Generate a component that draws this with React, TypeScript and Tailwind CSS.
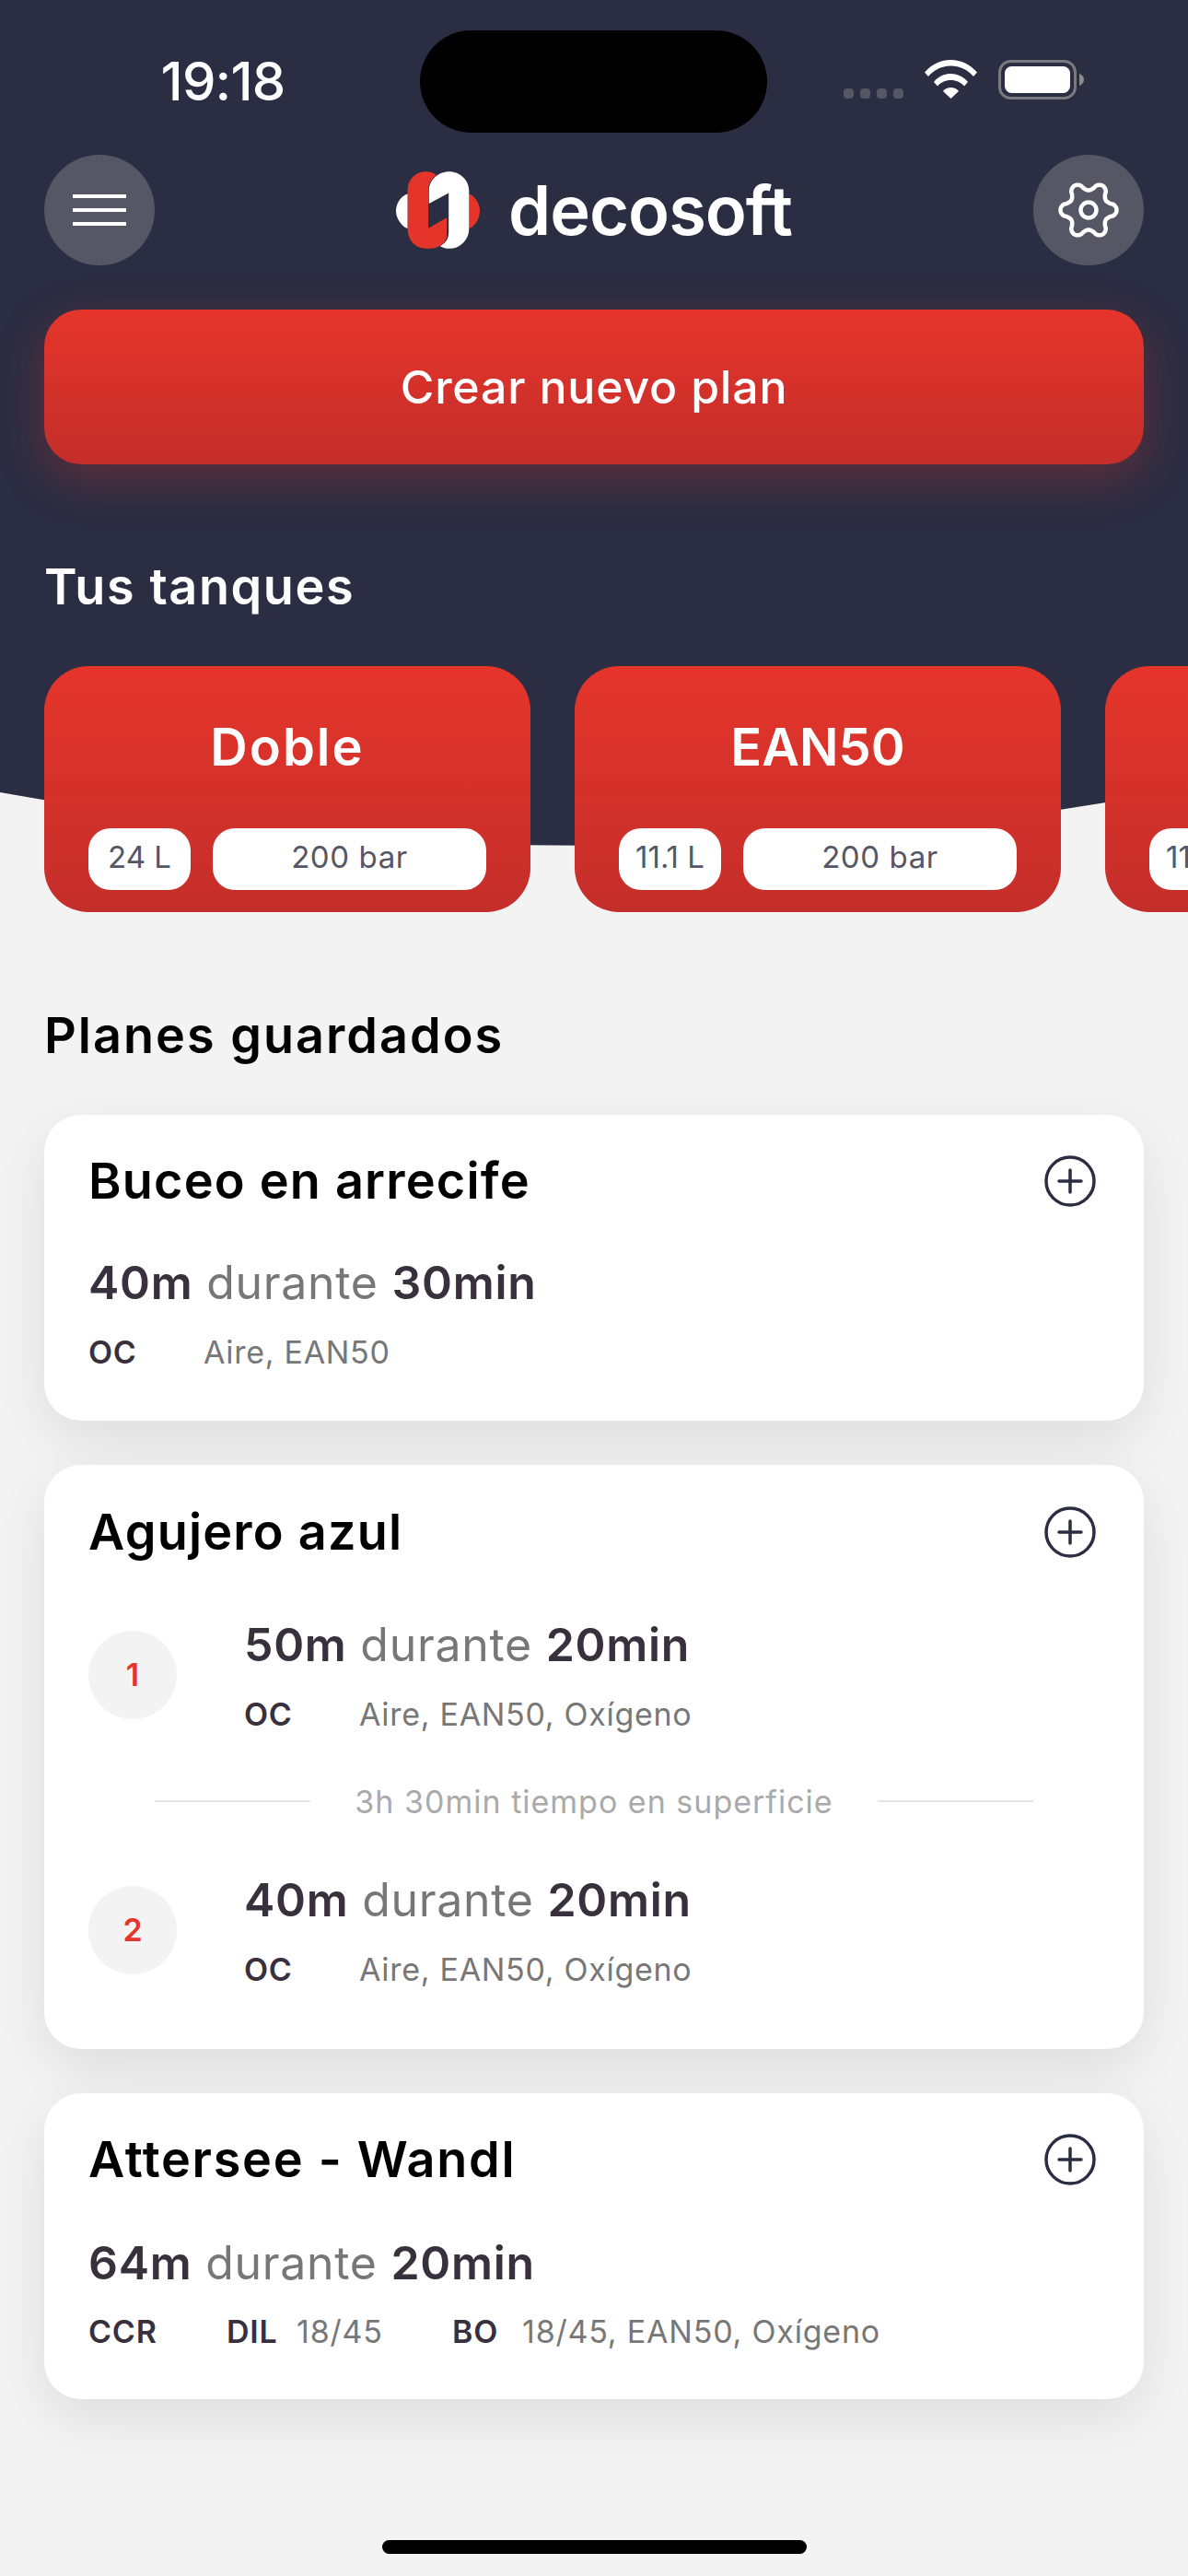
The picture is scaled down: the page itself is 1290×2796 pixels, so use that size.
import React from "react";

// six rounded lobes, left/right lobes on the horizontal axis
function gearPath() {
  const pts: string[] = [];
  for (let i = 0; i < 180; i++) {
    const a = (i / 180) * Math.PI * 2;
    const c = Math.cos(6 * a);
    const r = 26 + 4.5 * Math.sign(c) * Math.pow(Math.abs(c), 0.7);
    pts.push(`${(32 + r * Math.cos(a)).toFixed(2)} ${(32 + r * Math.sin(a)).toFixed(2)}`);
  }
  return "M" + pts.join("L") + "Z";
}

function StatusBar() {
  return (
    <div className="h-[168px] flex items-start relative">
      <div className="w-[484px] pt-[60px] text-center text-white text-[58px] leading-[56px] font-medium tracking-[-0.8px]">19:18</div>
      <div className="mt-[33px] ml-[-28px] w-[377px] h-[111px] rounded-full bg-black"></div>
      <div className="ml-[83px] mt-[96px] flex gap-[7px]">
        <div className="w-[11px] h-[11px] rounded-[4px] bg-[#565765]"></div>
        <div className="w-[11px] h-[11px] rounded-[4px] bg-[#565765]"></div>
        <div className="w-[11px] h-[11px] rounded-[4px] bg-[#565765]"></div>
        <div className="w-[11px] h-[11px] rounded-[4px] bg-[#565765]"></div>
      </div>
      <svg className="ml-[23px] mt-[65px]" width="57" height="42" viewBox="0 0 57 42" fill="#fff">
        <path d="M0 13.5C7.5 5 17.500 0 28.500 0S49.500 5 57 13.500L53 18C46.500 10.500 38 6.500 28.500 6.500S10.500 10.500 4 18Z" />
        <path d="M10 24C14.500 18.500 21 15 28.500 15S42.500 18.500 47 24L43 28.500C39.500 24.500 34.500 22 28.500 22S17.500 24.500 14 28.500Z" />
        <path d="M20 34C22 31.500 25 30 28.500 30S35 31.500 37 34L28.500 42Z" />
      </svg>
      <svg className="ml-[23px] mt-[65px]" width="93" height="43" viewBox="0 0 93 43" fill="none">
        <rect x="1.500" y="1.500" width="82" height="40" rx="12" stroke="#7a7a7e" strokeWidth="3" />
        <rect x="7" y="7" width="71" height="29" rx="7.500" fill="#fff" />
        <path d="M88 15C91 16 93 18.500 93 21.500S91 27 88 28Z" fill="#8b8b8d" />
      </svg>
    </div>
  );
}

function Logo() {
  return (
    <svg width="91" height="84" viewBox="93 78 272 250">
      <path fill="#fff" d="M131 150C105 160 93 185 93 205C93 230 110 255 131 263Z" />
      <path fill="#e5352b" d="M330 150C352 160 365 185 365 205C365 230 350 255 330 263Z" />
      <path fill="#e5352b" d="M131 140C131 100 160 78 192 78C205 78 215 82 224 90C208 100 198 118 198 140L198 262L258 228L258 285C258 300 248 312 234 320C220 328 205 328 192 328C160 328 131 305 131 265Z" />
      <path fill="#fff" d="M266 78C300 78 330 105 330 140L330 265C330 300 300 328 268 328C255 328 245 325 236 320C255 310 264 295 264 275L264 148L200 182L200 140C200 105 230 78 266 78Z" />
    </svg>
  );
}

function Header() {
  return (
    <div className="h-[120px] px-[48px] flex items-center justify-between">
      <div className="w-[120px] h-[120px] rounded-full bg-[#565765] flex flex-col items-center justify-center gap-[11px]">
        <div className="w-[58px] h-[4px] bg-white"></div>
        <div className="w-[58px] h-[4px] bg-white"></div>
        <div className="w-[58px] h-[4px] bg-white"></div>
      </div>
      <div className="flex items-center gap-[31px]">
        <Logo />
        <span className="text-white text-[74px] leading-[84px] font-semibold tracking-[-1px]">decosoft</span>
      </div>
      <div className="w-[120px] h-[120px] rounded-full bg-[#565765] flex items-center justify-center">
        <svg width="68" height="68" viewBox="-2 -2 68 68" fill="none" stroke="#fff" strokeWidth="4.500" strokeLinejoin="round">
          <path d={gearPath()} />
          <circle cx="32" cy="32" r="8.500" />
        </svg>
      </div>
    </div>
  );
}

function TankCard({ name, liters, spacing }: { name: string; liters: string; spacing: string }) {
  return (
    <div className="w-[528px] h-[267px] shrink-0 rounded-[48px] bg-gradient-to-b from-[#e5352b] to-[#c42e2a] px-[48px] pt-[52px] flex flex-col">
      <div className={"text-center text-white text-[56px] leading-[72px] font-semibold " + spacing}>{name}</div>
      <div className="mt-[52px] flex gap-[24px]">
        <div className="w-[111px] h-[67px] pb-[3px] rounded-[24px] bg-white flex items-center justify-center text-[#565765] text-[33px] whitespace-nowrap">{liters}</div>
        <div className="w-[297px] h-[67px] pb-[3px] rounded-[24px] bg-white flex items-center justify-center text-[#565765] text-[33px] tracking-[0.6px]">200 bar</div>
      </div>
    </div>
  );
}

function PlusIcon() {
  return (
    <svg width="56" height="56" viewBox="0 0 56 56" fill="none" stroke="#2b2d42" strokeWidth="3.500" strokeLinecap="round">
      <circle cx="28" cy="28" r="26" />
      <path d="M28 16V40M16 28H40" />
    </svg>
  );
}

function CardTitle({ title, spacing }: { title: string; spacing: string }) {
  return (
    <div className="h-[72px] flex items-center justify-between">
      <div className={"text-black text-[54px] leading-[72px] font-semibold " + spacing}>{title}</div>
      <div className="mr-[4px]"><PlusIcon /></div>
    </div>
  );
}

function DepthLine({ depth, time }: { depth: string; time: string }) {
  return (
    <div className="h-[64px] text-[50px] leading-[64px] text-[#777777] tracking-[0.7px] whitespace-nowrap">
      <span className="font-semibold text-[#38303c]">{depth}</span> durante <span className="font-semibold text-[#38303c]">{time}</span>
    </div>
  );
}

function GasLine({ gases }: { gases: string }) {
  return (
    <div className="h-[48px] flex items-center text-[34px] leading-[48px] tracking-[0.7px]">
      <span className="w-[125px] font-semibold text-[#38303c]">OC</span>
      <span className="text-[#777777]">{gases}</span>
    </div>
  );
}

function DiveRow({ num, depth, time, mt }: { num: string; depth: string; time: string; mt: string }) {
  return (
    <div className={"flex items-center gap-[73px] " + mt}>
      <div className="w-[96px] h-[96px] mb-[3px] rounded-full bg-[#f3f3f3] flex items-center justify-center text-[#e5352b] text-[34px] font-semibold">{num}</div>
      <div className="flex flex-col gap-[20px]">
        <DepthLine depth={depth} time={time} />
        <GasLine gases="Aire, EAN50, Oxígeno" />
      </div>
    </div>
  );
}

const cardClass = "rounded-[40px] bg-white px-[48px] shadow-[0_20px_60px_rgba(0,0,0,0.09)]";

export default function App() {
  return (
    <div className="relative w-[1290px] h-[2796px] overflow-hidden bg-[#f3f3f3] font-['Inter',sans-serif]">
      {/* curved dark backdrop behind the header */}
      <svg className="absolute top-0 left-0" width="1290" height="930" viewBox="0 0 1290 930">
        <path d="M0 0H1290V855Q650 978 0 860Z" fill="#2b2d42" />
      </svg>

      <div className="relative flex flex-col">
        <StatusBar />
        <Header />

        <div className="mx-[48px] mt-[48px] h-[168px] rounded-[40px] bg-gradient-to-b from-[#e5352b] to-[#c42e2a] shadow-[0_16px_50px_rgba(229,53,43,0.28)] flex items-center justify-center text-white text-[50px] font-medium tracking-[0.8px]">
          Crear nuevo plan
        </div>

        <div className="mt-[97px] px-[48px] text-white text-[54px] leading-[72px] font-semibold tracking-[1.6px]">Tus tanques</div>

        <div className="mt-[50px] pl-[48px] flex gap-[48px] overflow-hidden">
          <TankCard name="Doble" liters="24 L" spacing="tracking-[2px]" />
          <TankCard name="EAN50" liters="11.1 L" spacing="tracking-[0px]" />
          <TankCard name="Aire" liters="11.1 L" spacing="tracking-[0px]" />
        </div>

        <div className="mt-[98px] px-[48px] text-black text-[54px] leading-[72px] font-semibold tracking-[2px]">Planes guardados</div>

        <div className="mt-[50px] mx-[48px] flex flex-col gap-[48px]">
          <div className={cardClass + " h-[332px] pt-[36px]"}>
            <CardTitle title="Buceo en arrecife" spacing="tracking-[1.2px]" />
            <div className="mt-[42px]"><DepthLine depth="40m" time="30min" /></div>
            <div className="mt-[20px]"><GasLine gases="Aire, EAN50" /></div>
          </div>

          <div className={cardClass + " h-[634px] pt-[37px]"}>
            <CardTitle title="Agujero azul" spacing="tracking-[1.2px]" />
            <DiveRow num="1" depth="50m" time="20min" mt="mt-[54px]" />
            <div className="mt-[46px] mx-[72px] h-[48px] flex items-center justify-between">
              <div className="w-[169px] h-[2px] bg-[#e4e4e4]"></div>
              <span className="text-[#aaaaaa] text-[34px] tracking-[1px]">3h 30min tiempo en superficie</span>
              <div className="w-[169px] h-[2px] bg-[#e4e4e4]"></div>
            </div>
            <DiveRow num="2" depth="40m" time="20min" mt="mt-[51px]" />
          </div>

          <div className={cardClass + " h-[332px] pt-[36px]"}>
            <CardTitle title="Attersee - Wandl" spacing="tracking-[1.7px]" />
            <div className="mt-[44px]"><DepthLine depth="64m" time="20min" /></div>
            <div className="mt-[19px] h-[48px] flex items-center text-[34px] leading-[48px] tracking-[0.8px]">
              <span className="w-[150px] font-semibold text-[#38303c]">CCR</span>
              <span className="w-[76px] font-semibold text-[#38303c]">DIL</span>
              <span className="w-[169px] text-[#777777]">18/45</span>
              <span className="w-[76px] font-semibold text-[#38303c]">BO</span>
              <span className="text-[#777777]">18/45, EAN50, Oxígeno</span>
            </div>
          </div>
        </div>

        <div className="mt-[153px] self-center w-[461px] h-[15px] rounded-full bg-black"></div>
      </div>
    </div>
  );
}
